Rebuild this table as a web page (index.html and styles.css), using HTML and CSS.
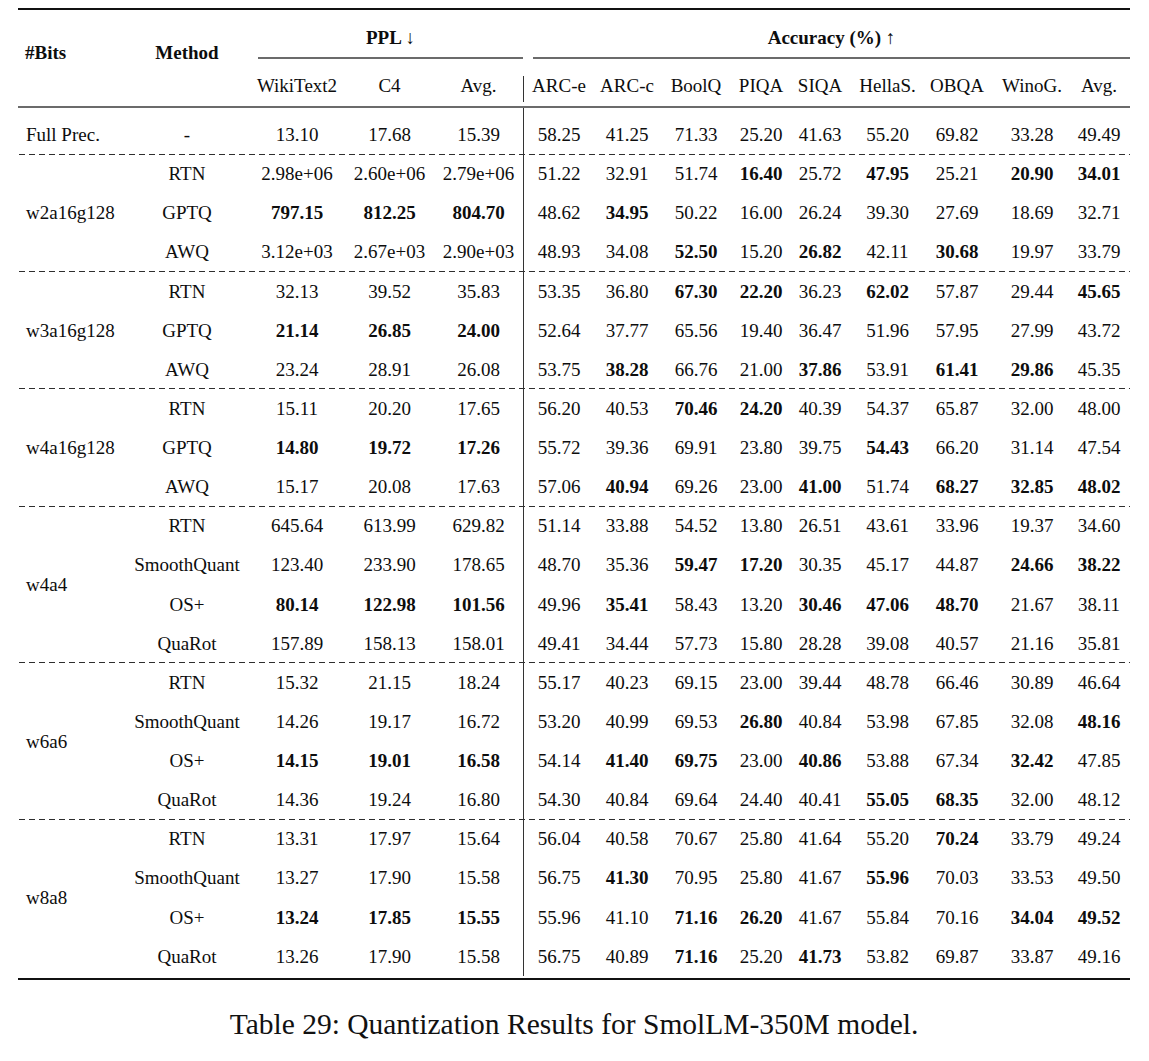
FILE: index.html
```html
<!DOCTYPE html>
<html>
<head>
<meta charset="utf-8">
<title>Table 29</title>
<link rel="stylesheet" href="styles.css">
</head>
<body>
<div class="page">
<table class="results">
<colgroup>
<col class="c-bits"><col class="c-method"><col class="c-wiki"><col class="c-c4"><col class="c-pavg">
<col class="c-arce"><col class="c-arcc"><col class="c-boolq"><col class="c-piqa"><col class="c-siqa">
<col class="c-hella"><col class="c-obqa"><col class="c-wino"><col class="c-aavg">
</colgroup>
<thead>
<tr class="h1">
<th rowspan="2" class="bits-h">#Bits</th>
<th rowspan="2" class="method-h">Method</th>
<th colspan="3" class="grp"><div class="grp-label ppl">PPL ↓</div></th>
<th colspan="9" class="grp"><div class="grp-label acc">Accuracy (%) ↑</div></th>
</tr>
<tr class="h2">
<th>WikiText2</th><th>C4</th><th>Avg.</th>
<th class="vl-h"><div class="vl-inner"><span>ARC-e</span></div></th>
<th>ARC-c</th><th>BoolQ</th><th>PIQA</th><th>SIQA</th><th>HellaS.</th><th>OBQA</th><th>WinoG.</th><th class="last-col">Avg.</th>
</tr>
</thead>
<tbody class="grp-body first-body">
<tr class="first-row"><td class="bits">Full Prec.</td><td>-</td><td>13.10</td><td>17.68</td><td>15.39</td><td class="vl">58.25</td><td>41.25</td><td>71.33</td><td>25.20</td><td>41.63</td><td>55.20</td><td>69.82</td><td>33.28</td><td class="last-col">49.49</td></tr>
</tbody>
<tbody class="grp-body">
<tr><td rowspan="3" class="bits">w2a16g128</td><td>RTN</td><td>2.98e+06</td><td>2.60e+06</td><td>2.79e+06</td><td class="vl">51.22</td><td>32.91</td><td>51.74</td><td><b>16.40</b></td><td>25.72</td><td><b>47.95</b></td><td>25.21</td><td><b>20.90</b></td><td class="last-col"><b>34.01</b></td></tr>
<tr><td>GPTQ</td><td><b>797.15</b></td><td><b>812.25</b></td><td><b>804.70</b></td><td class="vl">48.62</td><td><b>34.95</b></td><td>50.22</td><td>16.00</td><td>26.24</td><td>39.30</td><td>27.69</td><td>18.69</td><td class="last-col">32.71</td></tr>
<tr><td>AWQ</td><td>3.12e+03</td><td>2.67e+03</td><td>2.90e+03</td><td class="vl">48.93</td><td>34.08</td><td><b>52.50</b></td><td>15.20</td><td><b>26.82</b></td><td>42.11</td><td><b>30.68</b></td><td>19.97</td><td class="last-col">33.79</td></tr>
</tbody>
<tbody class="grp-body">
<tr><td rowspan="3" class="bits">w3a16g128</td><td>RTN</td><td>32.13</td><td>39.52</td><td>35.83</td><td class="vl">53.35</td><td>36.80</td><td><b>67.30</b></td><td><b>22.20</b></td><td>36.23</td><td><b>62.02</b></td><td>57.87</td><td>29.44</td><td class="last-col"><b>45.65</b></td></tr>
<tr><td>GPTQ</td><td><b>21.14</b></td><td><b>26.85</b></td><td><b>24.00</b></td><td class="vl">52.64</td><td>37.77</td><td>65.56</td><td>19.40</td><td>36.47</td><td>51.96</td><td>57.95</td><td>27.99</td><td class="last-col">43.72</td></tr>
<tr><td>AWQ</td><td>23.24</td><td>28.91</td><td>26.08</td><td class="vl">53.75</td><td><b>38.28</b></td><td>66.76</td><td>21.00</td><td><b>37.86</b></td><td>53.91</td><td><b>61.41</b></td><td><b>29.86</b></td><td class="last-col">45.35</td></tr>
</tbody>
<tbody class="grp-body">
<tr><td rowspan="3" class="bits">w4a16g128</td><td>RTN</td><td>15.11</td><td>20.20</td><td>17.65</td><td class="vl">56.20</td><td>40.53</td><td><b>70.46</b></td><td><b>24.20</b></td><td>40.39</td><td>54.37</td><td>65.87</td><td>32.00</td><td class="last-col">48.00</td></tr>
<tr><td>GPTQ</td><td><b>14.80</b></td><td><b>19.72</b></td><td><b>17.26</b></td><td class="vl">55.72</td><td>39.36</td><td>69.91</td><td>23.80</td><td>39.75</td><td><b>54.43</b></td><td>66.20</td><td>31.14</td><td class="last-col">47.54</td></tr>
<tr><td>AWQ</td><td>15.17</td><td>20.08</td><td>17.63</td><td class="vl">57.06</td><td><b>40.94</b></td><td>69.26</td><td>23.00</td><td><b>41.00</b></td><td>51.74</td><td><b>68.27</b></td><td><b>32.85</b></td><td class="last-col"><b>48.02</b></td></tr>
</tbody>
<tbody class="grp-body">
<tr><td rowspan="4" class="bits">w4a4</td><td>RTN</td><td>645.64</td><td>613.99</td><td>629.82</td><td class="vl">51.14</td><td>33.88</td><td>54.52</td><td>13.80</td><td>26.51</td><td>43.61</td><td>33.96</td><td>19.37</td><td class="last-col">34.60</td></tr>
<tr><td>SmoothQuant</td><td>123.40</td><td>233.90</td><td>178.65</td><td class="vl">48.70</td><td>35.36</td><td><b>59.47</b></td><td><b>17.20</b></td><td>30.35</td><td>45.17</td><td>44.87</td><td><b>24.66</b></td><td class="last-col"><b>38.22</b></td></tr>
<tr><td>OS+</td><td><b>80.14</b></td><td><b>122.98</b></td><td><b>101.56</b></td><td class="vl">49.96</td><td><b>35.41</b></td><td>58.43</td><td>13.20</td><td><b>30.46</b></td><td><b>47.06</b></td><td><b>48.70</b></td><td>21.67</td><td class="last-col">38.11</td></tr>
<tr><td>QuaRot</td><td>157.89</td><td>158.13</td><td>158.01</td><td class="vl">49.41</td><td>34.44</td><td>57.73</td><td>15.80</td><td>28.28</td><td>39.08</td><td>40.57</td><td>21.16</td><td class="last-col">35.81</td></tr>
</tbody>
<tbody class="grp-body">
<tr><td rowspan="4" class="bits">w6a6</td><td>RTN</td><td>15.32</td><td>21.15</td><td>18.24</td><td class="vl">55.17</td><td>40.23</td><td>69.15</td><td>23.00</td><td>39.44</td><td>48.78</td><td>66.46</td><td>30.89</td><td class="last-col">46.64</td></tr>
<tr><td>SmoothQuant</td><td>14.26</td><td>19.17</td><td>16.72</td><td class="vl">53.20</td><td>40.99</td><td>69.53</td><td><b>26.80</b></td><td>40.84</td><td>53.98</td><td>67.85</td><td>32.08</td><td class="last-col"><b>48.16</b></td></tr>
<tr><td>OS+</td><td><b>14.15</b></td><td><b>19.01</b></td><td><b>16.58</b></td><td class="vl">54.14</td><td><b>41.40</b></td><td><b>69.75</b></td><td>23.00</td><td><b>40.86</b></td><td>53.88</td><td>67.34</td><td><b>32.42</b></td><td class="last-col">47.85</td></tr>
<tr><td>QuaRot</td><td>14.36</td><td>19.24</td><td>16.80</td><td class="vl">54.30</td><td>40.84</td><td>69.64</td><td>24.40</td><td>40.41</td><td><b>55.05</b></td><td><b>68.35</b></td><td>32.00</td><td class="last-col">48.12</td></tr>
</tbody>
<tbody class="last-body">
<tr><td rowspan="4" class="bits">w8a8</td><td>RTN</td><td>13.31</td><td>17.97</td><td>15.64</td><td class="vl">56.04</td><td>40.58</td><td>70.67</td><td>25.80</td><td>41.64</td><td>55.20</td><td><b>70.24</b></td><td>33.79</td><td class="last-col">49.24</td></tr>
<tr><td>SmoothQuant</td><td>13.27</td><td>17.90</td><td>15.58</td><td class="vl">56.75</td><td><b>41.30</b></td><td>70.95</td><td>25.80</td><td>41.67</td><td><b>55.96</b></td><td>70.03</td><td>33.53</td><td class="last-col">49.50</td></tr>
<tr><td>OS+</td><td><b>13.24</b></td><td><b>17.85</b></td><td><b>15.55</b></td><td class="vl">55.96</td><td>41.10</td><td><b>71.16</b></td><td><b>26.20</b></td><td>41.67</td><td>55.84</td><td>70.16</td><td><b>34.04</b></td><td class="last-col"><b>49.52</b></td></tr>
<tr><td>QuaRot</td><td>13.26</td><td>17.90</td><td>15.58</td><td class="vl">56.75</td><td>40.89</td><td><b>71.16</b></td><td>25.20</td><td><b>41.73</b></td><td>53.82</td><td>69.87</td><td>33.87</td><td class="last-col">49.16</td></tr>
</tbody>
</table>
<p class="caption">Table 29: Quantization Results for SmolLM-350M model.</p>
</div>
</body>
</html>
```

FILE: styles.css
```css
html, body {
  margin: 0;
  padding: 0;
  background: #ffffff;
}

body {
  font-family: "Liberation Serif", "Times New Roman", serif;
  color: #0d0d0d;
}

.page {
  width: 1112px;
  padding: 8px 0 0 18px;
}

.results {
  width: 1112px;
  table-layout: fixed;
  border-collapse: separate;
  border-spacing: 0;
  border-top: 2px solid #111111;
  border-bottom: 2px solid #111111;
  padding-bottom: 2px;
  font-size: 19px;
  line-height: 20px;
}

.c-bits { width: 107px; }
.c-method { width: 124px; }
.c-wiki { width: 96px; }
.c-c4 { width: 89px; }
.c-pavg { width: 89px; }
.c-arce { width: 71px; }
.c-arcc { width: 66px; }
.c-boolq { width: 72px; }
.c-piqa { width: 58px; }
.c-siqa { width: 60px; }
.c-hella { width: 75px; }
.c-obqa { width: 64px; }
.c-wino { width: 86px; }
.c-aavg { width: 55px; }

.results th,
.results td {
  padding: 0;
  text-align: center;
  white-space: nowrap;
}

.results th {
  font-weight: normal;
}

/* Header row 1 */
.h1 .bits-h,
.h1 .method-h {
  font-weight: bold;
  vertical-align: top;
  padding-top: 33px;
  border-bottom: 2px solid #6b6b6b;
}

.h1 .bits-h {
  text-align: left;
  padding-left: 7px;
}

.h1 .grp {
  vertical-align: top;
}

.grp-label {
  font-weight: bold;
  padding-top: 18px;
  padding-bottom: 9px;
  border-bottom: 2px solid #6b6b6b;
}

.grp-label.ppl {
  margin-left: 9px;
}

.grp-label.acc {
  margin-left: 10px;
}

/* Header row 2 */
.h2 th {
  vertical-align: top;
  padding-top: 17px;
  padding-bottom: 10px;
  border-bottom: 2px solid #6b6b6b;
}

.h2 th.vl-h {
  padding-top: 21px;
  padding-bottom: 0;
}

.vl-inner {
  height: 26px;
  border-left: 1px solid #333333;
}

.vl-inner span {
  display: block;
  margin-top: -4px;
}

.results th.last-col,
.results td.last-col {
  padding-right: 7px;
}

/* Body */
.results tbody tr {
  height: 39.14px;
}

.results tbody tr.first-row {
  height: 46.64px;
}

.first-row td {
  padding-top: 7.5px;
}

.results td {
  vertical-align: middle;
}

.results td.bits {
  text-align: left;
  padding-left: 8px;
}

.results td.vl {
  border-left: 1px solid #333333;
}

.grp-body {
  background-image: linear-gradient(to right, #2e2e2e 6px, transparent 6px);
  background-size: 10px 1px;
  background-repeat: repeat-x;
  background-position: 1px 100%;
}

.caption {
  width: 1112px;
  margin: 27px 0 0 0;
  text-align: center;
  font-size: 29.5px;
  line-height: 34px;
  color: #111111;
}
```
